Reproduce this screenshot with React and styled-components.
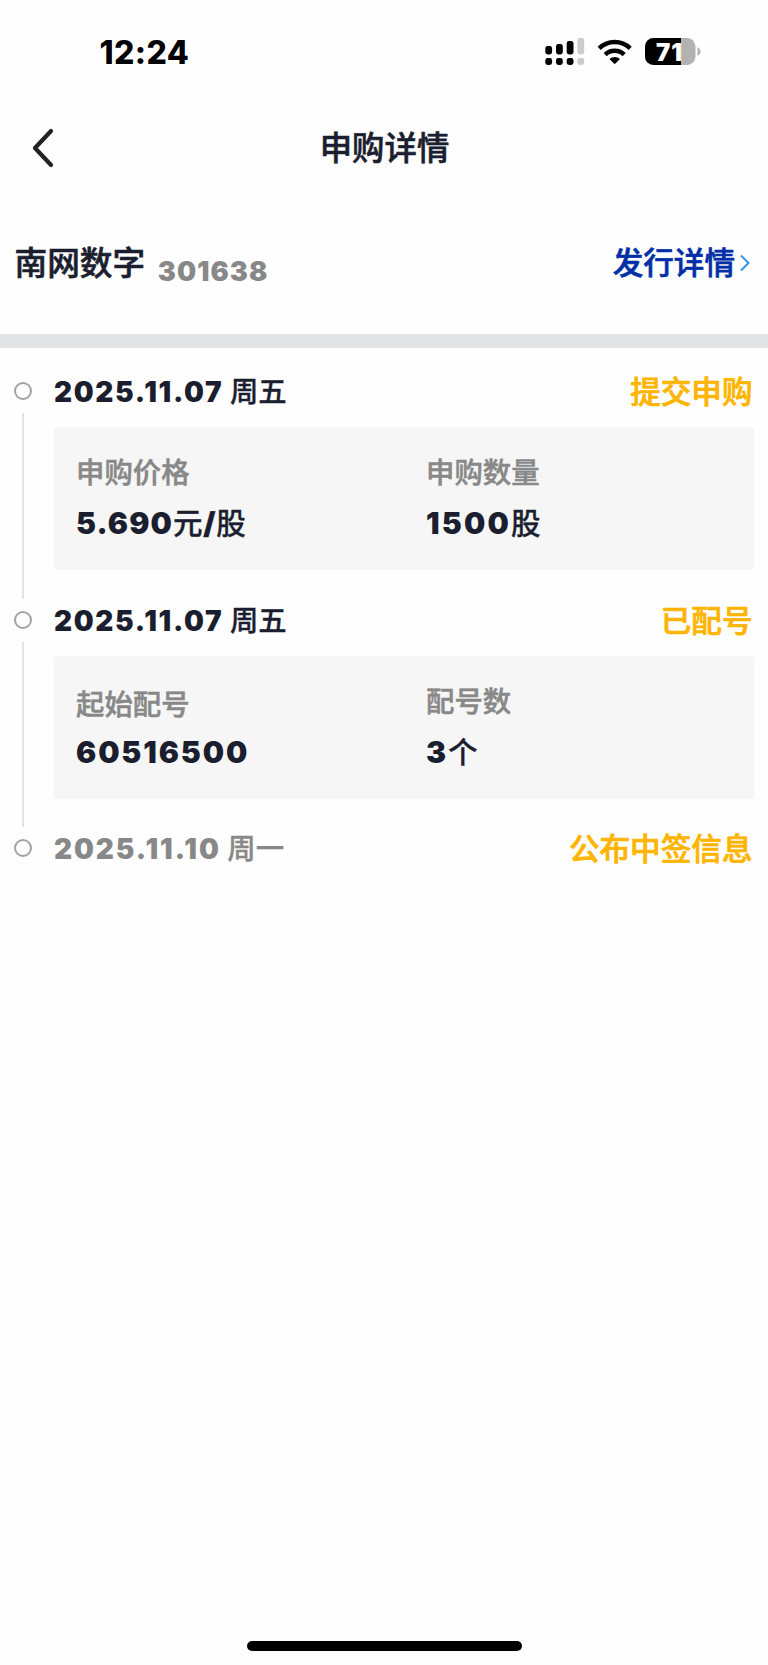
import styled, { createGlobalStyle } from "styled-components";

const GlobalStyle = createGlobalStyle`
  * {
    box-sizing: border-box;
  }

  body {
    margin: 0;
    background: #fefefe;
    font-family: Inter, "Noto Sans CJK SC", sans-serif;
    color: #1b1e2f;
  }
`

const Page = styled.div`
  display: flex;
  flex-direction: column;
  min-height: 1665px;
`

const StatusBar = styled.div`
  display: flex;
  align-items: center;
  justify-content: space-between;
  height: 104px;
  padding: 0 67px 0 99.5px;
  color: #000;
`

const Clock = styled.span`
  font-size: 32px;
  font-weight: 800;
  line-height: 40px;
  letter-spacing: 0.4px;
  margin-top: 2px;
`

const StatusIcons = styled.svg`
  display: block;
  width: 156px;
  height: 28px;
`

const NavBar = styled.header`
  display: grid;
  grid-template-columns: 100px 1fr 100px;
  align-items: center;
  height: 88px;
`

const BackIcon = styled.svg`
  display: block;
  width: 24px;
  height: 40px;
  margin-left: 31px;
`

const Title = styled.h1`
  margin: 2px 0 0 1px;
  text-align: center;
  font-size: 32.4px;
  font-weight: 500;
  line-height: 40px;
  -webkit-text-stroke: 0.6px;
`

const StockHeader = styled.section`
  display: flex;
  align-items: flex-start;
  height: 142px;
  padding: 51px 17px 0 14.5px;
  line-height: 40px;
`

const StockName = styled.span`
  font-size: 32.7px;
  font-weight: 500;
  -webkit-text-stroke: 0.6px;
`

const StockCode = styled.span`
  margin: 9px 0 0 12.5px;
  font-size: 27px;
  font-weight: 900;
  letter-spacing: 1.1px;
  color: #888;
`

const IssueLink = styled.a`
  display: flex;
  align-items: center;
  margin-left: auto;
  font-size: 30.6px;
  font-weight: 500;
  color: #002fa7;
  -webkit-text-stroke: 0.6px;
`

const LinkArrow = styled.svg`
  width: 12px;
  height: 20px;
  margin-left: 4px;
`

const Divider = styled.div`
  height: 14px;
  background: #e3e4e6;
`

const Timeline = styled.ol`
  margin: 0;
  padding: 22px 14px 0 0;
  list-style: none;
`

const Step = styled.li`
  display: grid;
  grid-template-columns: 54px 1fr;
  height: ${({ $last }) => ($last ? "43px" : "228.7px")};
`

const Track = styled.div`
  display: flex;
  flex-direction: column;
  align-items: center;
  width: 46px;
`

const Dot = styled.span`
  flex: none;
  width: 18px;
  height: 18px;
  margin: 12px 0 13px;
  border: 2px solid #a3a3a3;
  border-radius: 50%;
`

const Line = styled.span`
  flex: 1;
  width: 2px;
  background: #e3e3e7;
`

const StepHead = styled.div`
  display: flex;
  align-items: center;
  justify-content: space-between;
  height: 43px;
  padding: 1px 1.5px 0 0;
`

const StepDate = styled.span`
  font-size: 28px;
  font-weight: 900;
  line-height: 40px;
  letter-spacing: ${({ $muted }) => ($muted ? 1.9 : 1.65)}px;
  white-space: nowrap;
  color: ${({ $muted }) => ($muted ? "#888" : "inherit")};
`

const Weekday = styled.span`
  margin-left: 6.5px;
  font-size: 28.4px;
  font-weight: 500;
  letter-spacing: 0;
  -webkit-text-stroke: 0.3px;
`

const StepStatus = styled.span`
  font-size: 30.6px;
  font-weight: 500;
  line-height: 40px;
  color: #ffb400;
  -webkit-text-stroke: 0.7px;
`

const Card = styled.div`
  display: grid;
  grid-template-columns: 1fr 1fr;
  height: 143px;
  margin-top: 14px;
  border-radius: 4px;
  background: #f6f6f6;
`

const Field = styled.div`
  display: flex;
  flex-direction: column;
  padding: 26px 0 0 22px;
  line-height: 40px;
`

const FieldLabel = styled.span`
  height: 40px;
  margin-top: ${({ $drop }) => $drop || 0}px;
  margin-bottom: ${({ $drop }) => 10 - ($drop || 0)}px;
  font-size: 28.4px;
  font-weight: 500;
  color: #888;
  -webkit-text-stroke: 0.5px;
`

const FieldValue = styled.span`
  font-size: 30px;
  font-weight: 900;
  letter-spacing: ${({ $spacing }) => $spacing || 1.9}px;
`

const Unit = styled.span`
  font-size: 29.6px;
  font-weight: 500;
  letter-spacing: 0;
  -webkit-text-stroke: 0.3px;
`

const Slash = styled.b`
  margin: 0 0.8px;
  font-weight: 900;
`

const HomeBar = styled.div`
  width: 275px;
  height: 9.5px;
  margin: auto auto 14.5px;
  border-radius: 5px;
  background: #000;
`

const steps = [
  {
    date: "2025.11.07",
    weekday: "周五",
    status: "提交申购",
    fields: [
      { label: "申购价格", value: "5.690", unit: <>元<Slash>/</Slash>股</>, spacing: 1.1 },
      { label: "申购数量", value: "1500", unit: "股", spacing: 2.2 },
    ],
  },
  {
    date: "2025.11.07",
    weekday: "周五",
    status: "已配号",
    fields: [
      { label: "起始配号", value: "60516500", drop: 3 },
      { label: "配号数", value: "3", unit: "个" },
    ],
  },
  { date: "2025.11.10", weekday: "周一", status: "公布中签信息", muted: true },
]

// Dual-SIM signal, wifi and battery
function PhoneStatus() {
  return (
    <StatusIcons viewBox="545 38 156 28">
      <rect x="545.3" y="46" width="6.8" height="8.5" rx="2.4" />
      <rect x="556" y="44" width="6.8" height="10.5" rx="2.4" />
      <rect x="566.7" y="41" width="6.8" height="13.5" rx="2.4" />
      <rect x="577.4" y="38" width="6.8" height="16.5" rx="2.4" fill="#ccc" />
      <rect x="545.3" y="58" width="6.8" height="7" rx="2.4" />
      <rect x="556" y="58" width="6.8" height="7" rx="2.4" />
      <rect x="566.7" y="58" width="6.8" height="7" rx="2.4" />
      <rect x="577.4" y="58" width="6.8" height="7" rx="2.4" fill="#ccc" />

      <g fill="none" stroke="#000" strokeWidth="4.4">
        <path d="M599.2 48.3a22.3 22.3 0 0 1 31 0" />
        <path d="M605.2 54.6a13.7 13.7 0 0 1 19 0" />
      </g>
      <path d="M609.4 59.1a7.6 7.6 0 0 1 10.6 0l-4.6 4.5a1 1 0 0 1-1.4 0z" />

      <clipPath id="battery">
        <rect x="645" y="38" width="50.5" height="27" rx="8.5" />
      </clipPath>
      <g clipPath="url(#battery)">
        <rect x="645" y="38" width="51" height="27" fill="#b2b2b2" />
        <rect x="645" y="38" width="36" height="27" />
      </g>
      <path d="M697.5 47.3q3 1.2 3 4.2t-3 4.2z" fill="#b2b2b2" />
      <text x="656" y="60.5" fill="#fff" fontSize="24" fontWeight="900" textLength="26" lengthAdjust="spacing">71</text>
    </StatusIcons>
  )
}

function TimelineStep({ date, weekday, status, fields, muted, last }) {
  return (
    <Step $last={last}>
      <Track>
        <Dot />
        {!last && <Line />}
      </Track>
      <div>
        <StepHead>
          <StepDate $muted={muted}>
            {date}
            <Weekday>{weekday}</Weekday>
          </StepDate>
          <StepStatus>{status}</StepStatus>
        </StepHead>
        {fields && (
          <Card>
            {fields.map((field) => (
              <Field key={field.label}>
                <FieldLabel $drop={field.drop}>{field.label}</FieldLabel>
                <FieldValue $spacing={field.spacing}>
                  {field.value}
                  {field.unit && <Unit>{field.unit}</Unit>}
                </FieldValue>
              </Field>
            ))}
          </Card>
        )}
      </div>
    </Step>
  )
}

function App() {
  return (
    <Page>
      <GlobalStyle />
      <StatusBar>
        <Clock>12:24</Clock>
        <PhoneStatus />
      </StatusBar>

      <NavBar>
        <BackIcon viewBox="0 0 24 40">
          <path d="M20 3L4 20l16 17" fill="none" stroke="#222" strokeWidth="4.2" strokeLinecap="round" strokeLinejoin="round" />
        </BackIcon>
        <Title>申购详情</Title>
      </NavBar>

      <StockHeader>
        <StockName>南网数字</StockName>
        <StockCode>301638</StockCode>
        <IssueLink>
          发行详情
          <LinkArrow viewBox="0 0 12 20">
            <path d="M2 2.5l7.500 7.500L2 17.500" fill="none" stroke="#3296e6" strokeWidth="2" />
          </LinkArrow>
        </IssueLink>
      </StockHeader>

      <Divider />

      <Timeline>
        {steps.map((step, i) => (
          <TimelineStep key={i} {...step} last={i === steps.length - 1} />
        ))}
      </Timeline>

      <HomeBar />
    </Page>
  )
}

export default App;
